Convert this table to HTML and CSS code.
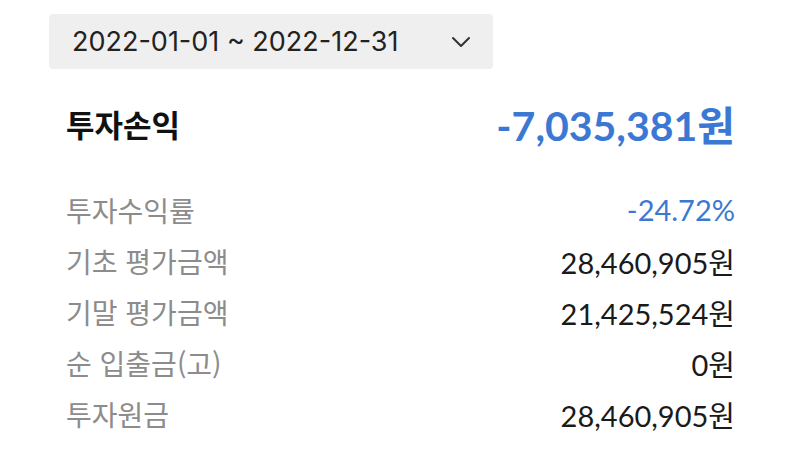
FILE: index.html
```html
<!DOCTYPE html>
<html lang="ko">
<head>
    <meta charset="UTF-8">
    <title>투자손익</title>
    <link rel="stylesheet" href="styles.css">
</head>
<body>
    <div class="page">
        <div class="period">
            <span class="period-text">2022-01-01 ~ 2022-12-31</span>
            <svg class="chevron" width="20" height="12" viewBox="0 0 20 12">
                <path d="M2 2 L10 10 L18 2" fill="none" stroke="#333" stroke-width="2" stroke-linecap="round" stroke-linejoin="round"/>
            </svg>
        </div>

        <div class="summary">
            <div class="summary-label">투자손익</div>
            <div class="summary-value">-7,035,381원</div>
        </div>

        <div class="rows">
            <div class="row">
                <span class="label">투자수익률</span>
                <span class="value minus">-24.72%</span>
            </div>
            <div class="row">
                <span class="label">기초 평가금액</span>
                <span class="value">28,460,905원</span>
            </div>
            <div class="row">
                <span class="label">기말 평가금액</span>
                <span class="value">21,425,524원</span>
            </div>
            <div class="row">
                <span class="label">순 입출금(고)</span>
                <span class="value">0원</span>
            </div>
            <div class="row">
                <span class="label">투자원금</span>
                <span class="value">28,460,905원</span>
            </div>
        </div>
    </div>
</body>
</html>
```

FILE: styles.css
```css
body {
    margin: 0;
    background-color: #fff;
    font-family: 'Lato', 'Noto Sans CJK KR', sans-serif;
    color: #222;
}
.page {
    padding: 14px 65px 0 49px;
}
.period {
    display: flex;
    align-items: center;
    justify-content: space-between;
    width: 444px;
    height: 55px;
    box-sizing: border-box;
    padding: 0 22px 0 23px;
    background-color: #efefef;
    border-radius: 4px;
}
.period-text {
    font-family: 'Inter', 'Noto Sans', sans-serif;
    font-size: 27px;
    color: #222;
}
.summary {
    display: flex;
    align-items: center;
    justify-content: space-between;
    margin: 31px 0 0 17px;
    height: 46px;
}
.summary-label {
    font-family: 'Noto Sans CJK KR', sans-serif;
    font-size: 31px;
    font-weight: bold;
    color: #111;
}
.summary-value {
    font-size: 41px;
    font-weight: bold;
    color: #3b78d4;
}
.rows {
    margin: 38px 0 0 17px;
}
.row {
    display: flex;
    align-items: center;
    justify-content: space-between;
    height: 51px;
}
.label {
    font-family: 'Noto Sans CJK KR', sans-serif;
    font-size: 28px;
    color: #8c8c8c;
}
.value {
    font-size: 29px;
    color: #1a1a1a;
}
.value.minus {
    color: #3b78d4;
}
```
